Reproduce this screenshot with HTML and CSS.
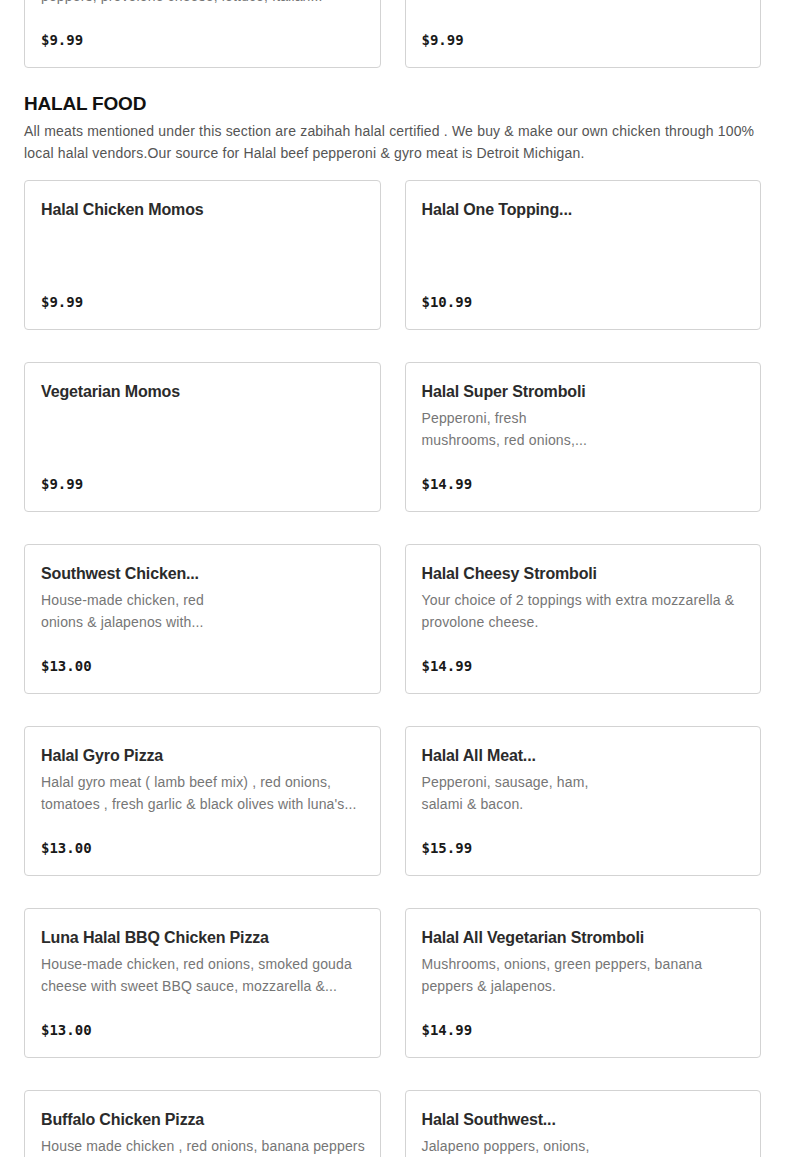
FILE: index.html
```html
<!DOCTYPE html>
<html lang="en">
<head>
<meta charset="utf-8">
<title>Menu</title>
<link rel="stylesheet" href="styles.css">
</head>
<body>
<main class="menu">
  <div class="grid grid-prev">
    <div class="card">
      <div class="card-body">
        <h3 class="title">Halal Chicken Sub</h3>
        <p class="desc">House-made chicken, onions, green<br>peppers, provolone cheese, lettuce, Italian...</p>
      </div>
      <div class="price">$9.99</div>
    </div>
    <div class="card">
      <div class="card-body">
        <h3 class="title">Veggie Sub</h3>
      </div>
      <div class="price">$9.99</div>
    </div>
  </div>

  <section class="section">
    <h2 class="section-title">HALAL FOOD</h2>
    <p class="section-desc">All meats mentioned under this section are zabihah halal certified . We buy &amp; make our own chicken through 100% local halal vendors.Our source for Halal beef pepperoni &amp; gyro meat is Detroit Michigan.</p>

    <div class="grid">
      <div class="card">
        <div class="card-body"><h3 class="title">Halal Chicken Momos</h3></div>
        <div class="price">$9.99</div>
      </div>
      <div class="card">
        <div class="card-body"><h3 class="title">Halal One Topping...</h3></div>
        <div class="price">$10.99</div>
      </div>

      <div class="card">
        <div class="card-body"><h3 class="title">Vegetarian Momos</h3></div>
        <div class="price">$9.99</div>
      </div>
      <div class="card">
        <div class="card-body">
          <h3 class="title">Halal Super Stromboli</h3>
          <p class="desc">Pepperoni, fresh<br>mushrooms, red onions,...</p>
        </div>
        <div class="price">$14.99</div>
      </div>

      <div class="card">
        <div class="card-body">
          <h3 class="title">Southwest Chicken...</h3>
          <p class="desc">House-made chicken, red<br>onions &amp; jalapenos with...</p>
        </div>
        <div class="price">$13.00</div>
      </div>
      <div class="card">
        <div class="card-body">
          <h3 class="title">Halal Cheesy Stromboli</h3>
          <p class="desc">Your choice of 2 toppings with extra mozzarella &amp;<br>provolone cheese.</p>
        </div>
        <div class="price">$14.99</div>
      </div>

      <div class="card">
        <div class="card-body">
          <h3 class="title">Halal Gyro Pizza</h3>
          <p class="desc">Halal gyro meat ( lamb beef mix) , red onions,<br>tomatoes , fresh garlic &amp; black olives with luna's...</p>
        </div>
        <div class="price">$13.00</div>
      </div>
      <div class="card">
        <div class="card-body">
          <h3 class="title">Halal All Meat...</h3>
          <p class="desc">Pepperoni, sausage, ham,<br>salami &amp; bacon.</p>
        </div>
        <div class="price">$15.99</div>
      </div>

      <div class="card">
        <div class="card-body">
          <h3 class="title">Luna Halal BBQ Chicken Pizza</h3>
          <p class="desc">House-made chicken, red onions, smoked gouda<br>cheese with sweet BBQ sauce, mozzarella &amp;...</p>
        </div>
        <div class="price">$13.00</div>
      </div>
      <div class="card">
        <div class="card-body">
          <h3 class="title">Halal All Vegetarian Stromboli</h3>
          <p class="desc">Mushrooms, onions, green peppers, banana<br>peppers &amp; jalapenos.</p>
        </div>
        <div class="price">$14.99</div>
      </div>

      <div class="card">
        <div class="card-body">
          <h3 class="title">Buffalo Chicken Pizza</h3>
          <p class="desc">House made chicken , red onions, banana peppers<br>&amp; jalapenos with buffalo sauce...</p>
        </div>
        <div class="price">$13.00</div>
      </div>
      <div class="card">
        <div class="card-body">
          <h3 class="title">Halal Southwest...</h3>
          <p class="desc">Jalapeno poppers, onions,<br>green peppers &amp; chicken...</p>
        </div>
        <div class="price">$14.99</div>
      </div>
    </div>
  </section>
</main>
</body>
</html>
```

FILE: styles.css
```css
* { box-sizing: border-box; }

html, body {
  margin: 0;
  padding: 0;
  background: #ffffff;
}

body {
  font-family: "Liberation Sans", Arial, sans-serif;
  color: #191919;
  overflow: hidden;
}

.menu {
  padding: 0 24px;
}

.grid {
  display: grid;
  grid-template-columns: repeat(2, minmax(0, 1fr));
  column-gap: 24px;
  row-gap: 32px;
}

.grid-prev {
  margin-top: -82px;
}

.card {
  min-width: 0;
  height: 150px;
  border: 1px solid #d3d3d3;
  border-radius: 4px;
  padding: 16px;
  display: flex;
  flex-direction: column;
  justify-content: space-between;
  background: #fff;
}

.card-body {
  min-width: 0;
}

.title {
  margin: 0;
  padding-top: 1px;
  font-size: 16px;
  line-height: 24px;
  font-weight: 700;
  letter-spacing: -0.15px;
  color: #2b2b2b;
}

.desc {
  margin: 3px 0 0;
  font-size: 14px;
  line-height: 22px;
  letter-spacing: 0.15px;
  white-space: nowrap;
  color: #767676;
}

.price {
  font-family: "DejaVu Sans Mono", "Liberation Mono", monospace;
  font-weight: 700;
  font-size: 14px;
  line-height: 20px;
  margin-bottom: 1px;
  color: #191919;
}

.section {
  margin-top: 23px;
}

.section-title {
  margin: 0;
  padding-top: 1px;
  font-size: 19px;
  line-height: 24px;
  font-weight: 800;
  letter-spacing: -0.2px;
  color: #111;
}

.section-desc {
  margin: 4px 0 16px;
  font-size: 14px;
  line-height: 22px;
  letter-spacing: 0.18px;
  color: #555;
}
```
